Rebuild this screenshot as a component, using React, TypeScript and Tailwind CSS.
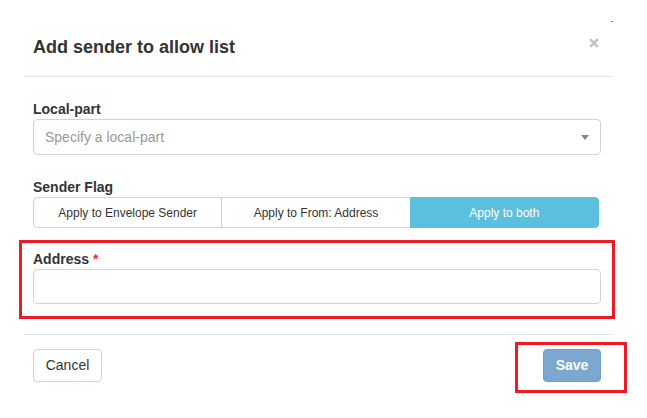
import { useState } from 'react';

const flags = ['Apply to Envelope Sender', 'Apply to From: Address', 'Apply to both'];

export default function App() {
  const [flag, setFlag] = useState(2);
  const [address, setAddress] = useState('');

  return (
    <div className="relative w-[647px] h-[418px] bg-white text-[#333] font-['Liberation_Sans',Arial,sans-serif]">
      <span className="absolute left-[611px] top-[21px] w-[2px] h-[1px] bg-[#3d8a8a]" />

      <div className="ml-[24px] w-[589px]">
        {/* header */}
        <div className="flex items-start h-[77px] pl-[9px] pr-[14px] pt-[37px] border-b border-[#e5e5e5]">
          <h4 className="text-[18px] leading-[20px] font-bold">Add sender to allow list</h4>
          <button type="button" className="ml-auto mt-[1px]" aria-label="Close">
            <svg width="10" height="10" viewBox="0 0 10 10" className="block">
              <path d="M1.2 1.2 L8.8 8.8 M8.8 1.2 L1.2 8.8" stroke="#c4c4c4" strokeWidth="2.6" />
            </svg>
          </button>
        </div>

        {/* body */}
        <div className="pl-[9px] pr-[12px] pt-[22px] pb-[30px] border-b border-[#e5e5e5]">
          <label className="block text-[14px] leading-[20px] font-bold">Local-part</label>
          <div className="flex items-center h-[36px] pl-[11px] pr-[11px] border border-[#d2d2d2] rounded-[4px]">
            <span className="text-[14px] text-[#999]">Specify a local-part</span>
            <span className="ml-auto w-0 h-0 border-x-[4px] border-x-transparent border-t-[5px] border-t-[#888]" />
          </div>

          <label className="block mt-[22px] text-[14px] leading-[20px] font-bold">Sender Flag</label>
          <div className="flex h-[31px] w-[566px]">
            {flags.map((f, i) => (
              <button
                key={f}
                type="button"
                onClick={() => setFlag(i)}
                className={
                  'flex-1 text-[12px] border ' +
                  (i === 0 ? 'rounded-l-[4px] ' : '-ml-px ') +
                  (i === 2 ? 'rounded-r-[4px] ' : '') +
                  (flag === i
                    ? 'bg-[#5bc0de] border-[#5bc0de] text-white'
                    : 'bg-white border-[#d2d2d2] text-[#333]')
                }
              >
                {f}
              </button>
            ))}
          </div>

          <div className="relative mt-[21px]">
            <label className="block text-[14px] leading-[20px] font-bold">
              Address <span className="text-[#d43f3a]">*</span>
            </label>
            <input
              value={address}
              onChange={(e) => setAddress(e.target.value)}
              className="block w-full h-[35px] px-[11px] text-[14px] border border-[#d2d2d2] rounded-[4px] outline-none"
            />
            <span className="absolute -left-[14px] -right-[14px] -top-[9px] -bottom-[15px] border-[3px] border-[#ed1c24] pointer-events-none" />
          </div>
        </div>

        {/* footer */}
        <div className="flex justify-between pl-[9px] pr-[12px] pt-[14px]">
          <button type="button" className="w-[69px] h-[33px] text-[14px] border border-[#d2d2d2] rounded-[4px] bg-white">
            Cancel
          </button>
          <div className="relative">
            <button type="button" disabled className="w-[58px] h-[33px] text-[14px] font-bold text-white bg-[#7aa8d0] border border-[#6f9ec9] rounded-[4px]">
              Save
            </button>
            <span className="absolute -left-[28px] -right-[26px] -top-[7px] -bottom-[11px] border-[3px] border-[#ed1c24] pointer-events-none" />
          </div>
        </div>
      </div>
    </div>
  );
}
